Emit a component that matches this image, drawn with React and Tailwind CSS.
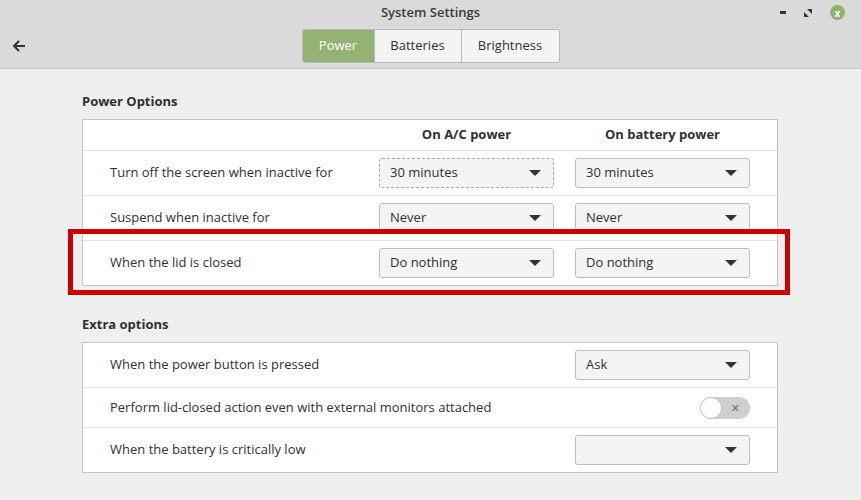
import React from 'react'

const font = { fontFamily: '"Open Sans", "DejaVu Sans", sans-serif' }

const Caret = () => (
  <svg width="12" height="6" viewBox="0 0 12 6" className="text-[#333]">
    <path d="M0 0 L12 0 L6 6 Z" fill="currentColor" />
  </svg>
)

const Dropdown = ({ value, focused }) => (
  <div
    className={`flex h-[30px] w-[175px] items-center justify-between rounded-[3px] border bg-[#f4f4f4] pl-[10px] pr-[12px] text-[13px] text-[#303030] ${
      focused ? 'border-dashed border-[#a8a8a8]' : 'border-[#bdbdbd]'
    }`}
  >
    <span>{value}</span>
    <Caret />
  </div>
)

const Row = ({ label, children, last, height = 'h-[45px]' }) => (
  <div className={`flex items-center pl-[27px] ${last ? 'h-[44px]' : `${height} border-b border-[#e3e3e3]`}`}>
    <div className="flex-1 text-[13px] text-[#303030]">{label}</div>
    {children}
  </div>
)

const Toggle = () => (
  <div className="relative mr-[27px] flex h-[22px] w-[50px] items-center justify-end rounded-full bg-[#cfcfcf] pr-[10px]">
    <span className="text-[11px] leading-none text-[#707070]">✕</span>
    <div className="absolute left-0 top-0 h-[22px] w-[22px] rounded-full border border-[#c4c4c4] bg-white" />
  </div>
)

export default function App() {
  return (
    <div className="relative h-[500px] w-[861px] overflow-hidden bg-[#efefef]" style={font}>
      <div className="h-[69px] border-b border-[#c8c8c8] bg-[#dadada]">
        <div className="relative flex h-[25px] items-center justify-center text-[13px] font-semibold text-[#3a3a3a]">
          System Settings
          <div className="absolute right-[16px] top-[5px] flex items-center gap-[18px]">
            <div className="h-[3px] w-[6px] bg-[#333]" />
            <svg width="8" height="8" viewBox="0 0 8 8">
              <path d="M3 0 L8 0 L8 5 Z M0 3 L0 8 L5 8 Z" fill="#333" />
            </svg>
            <div className="flex h-[15px] w-[15px] items-center justify-center rounded-full bg-[#8fb56a] text-[10px] font-bold leading-none text-white">
              x
            </div>
          </div>
        </div>
        <div className="relative flex items-center justify-center pt-[4px]">
          <svg
            className="absolute left-[12px] top-[14px]"
            width="14"
            height="14"
            viewBox="0 0 14 14"
            fill="none"
            stroke="#333"
            strokeWidth="2"
          >
            <path d="M13 7 H2 M7 2 L2 7 L7 12" />
          </svg>
          <div className="flex h-[34px] overflow-hidden rounded-[3px] border border-[#b8b8b8] text-[13px]">
            <div className="flex w-[71px] items-center justify-center bg-[#92b372] text-white">Power</div>
            <div className="flex w-[87px] items-center justify-center border-l border-[#b8b8b8] bg-[#f4f4f4] text-[#303030]">
              Batteries
            </div>
            <div className="flex w-[98px] items-center justify-center border-l border-[#b8b8b8] bg-[#f4f4f4] text-[#303030]">
              Brightness
            </div>
          </div>
        </div>
      </div>

      <div className="pl-[82px] pr-[83px] pt-[23px]">
        <h2 className="mb-[9px] text-[13px] font-bold leading-[18px] text-[#303030]">Power Options</h2>
        <div className="border border-[#c4c4c4] bg-white">
          <div className="flex h-[31px] items-center border-b border-[#e3e3e3] text-[13px] font-bold text-[#303030]">
            <div className="flex-1" />
            <div className="w-[175px] text-center">On A/C power</div>
            <div className="w-[21px]" />
            <div className="mr-[27px] w-[175px] text-center">On battery power</div>
          </div>
          <Row label="Turn off the screen when inactive for">
            <Dropdown value="30 minutes" focused />
            <div className="w-[21px]" />
            <div className="mr-[27px]">
              <Dropdown value="30 minutes" />
            </div>
          </Row>
          <Row label="Suspend when inactive for">
            <Dropdown value="Never" />
            <div className="w-[21px]" />
            <div className="mr-[27px]">
              <Dropdown value="Never" />
            </div>
          </Row>
          <Row label="When the lid is closed" last>
            <Dropdown value="Do nothing" />
            <div className="w-[21px]" />
            <div className="mr-[27px]">
              <Dropdown value="Do nothing" />
            </div>
          </Row>
        </div>

        <h2 className="mb-[9px] mt-[29px] text-[13px] font-bold leading-[18px] text-[#303030]">Extra options</h2>
        <div className="border border-[#c4c4c4] bg-white">
          <Row label="When the power button is pressed">
            <div className="mr-[27px]">
              <Dropdown value="Ask" />
            </div>
          </Row>
          <Row label="Perform lid-closed action even with external monitors attached" height="h-[40px]">
            <Toggle />
          </Row>
          <Row label="When the battery is critically low" last>
            <div className="mr-[27px]">
              <Dropdown value="" />
            </div>
          </Row>
        </div>
      </div>

      <div className="pointer-events-none absolute left-[68px] top-[229px] h-[66px] w-[722px] border-[5px] border-[#cc0000]" />
    </div>
  )
}
